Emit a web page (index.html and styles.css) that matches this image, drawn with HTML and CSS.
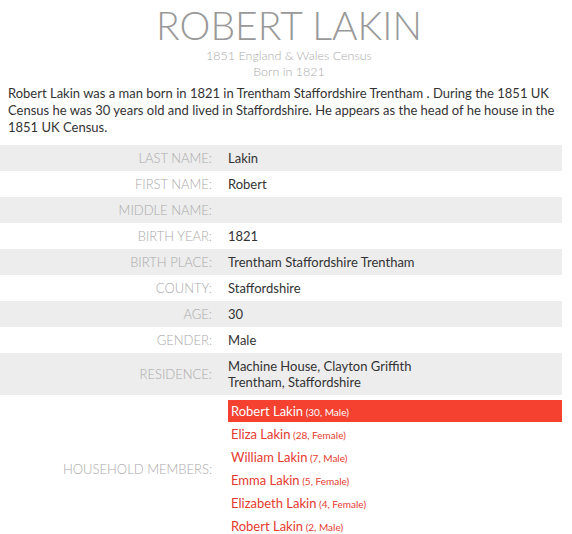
FILE: index.html
```html
<!DOCTYPE html>
<html>
<head>
<meta charset="utf-8">
<link rel="stylesheet" href="styles.css">
</head>
<body>
<div class="page">
  <header class="head">
    <h1 class="title">ROBERT LAKIN</h1>
    <div class="sub">1851 England &amp; Wales Census</div>
    <div class="sub">Born in 1821</div>
  </header>
  <p class="intro">Robert Lakin was a man born in 1821 in Trentham Staffordshire Trentham . During the 1851 UK Census he was 30 years old and lived in Staffordshire. He appears as the head of he house in the 1851 UK Census.</p>
  <div class="facts">
    <div class="row"><div class="label">LAST NAME:</div><div class="value">Lakin</div></div>
    <div class="row"><div class="label">FIRST NAME:</div><div class="value">Robert</div></div>
    <div class="row"><div class="label">MIDDLE NAME:</div><div class="value"></div></div>
    <div class="row"><div class="label">BIRTH YEAR:</div><div class="value">1821</div></div>
    <div class="row"><div class="label">BIRTH PLACE:</div><div class="value">Trentham Staffordshire Trentham</div></div>
    <div class="row"><div class="label">COUNTY:</div><div class="value">Staffordshire</div></div>
    <div class="row"><div class="label">AGE:</div><div class="value">30</div></div>
    <div class="row"><div class="label">GENDER:</div><div class="value">Male</div></div>
    <div class="row"><div class="label">RESIDENCE:</div><div class="value">Machine House, Clayton Griffith<br>Trentham, Staffordshire</div></div>
    <div class="row household"><div class="label">HOUSEHOLD MEMBERS:</div>
      <div class="value members">
        <div class="member current">Robert Lakin<small> (30, Male)</small></div>
        <div class="member">Eliza Lakin<small> (28, Female)</small></div>
        <div class="member">William Lakin<small> (7, Male)</small></div>
        <div class="member">Emma Lakin<small> (5, Female)</small></div>
        <div class="member">Elizabeth Lakin<small> (4, Female)</small></div>
        <div class="member">Robert Lakin<small> (2, Male)</small></div>
      </div>
    </div>
  </div>
</div>
</body>
</html>
```
FILE: styles.css
```css
html, body {
  margin: 0;
  padding: 0;
  background: #fff;
}
body {
  font-family: Lato, "Open Sans", sans-serif;
  font-size: 13px;
  color: #333;
}
.page {
  width: 562px;
  padding: 0 2px 0 8px;
}
.head {
  text-align: center;
  padding-top: 3px;
}
.title {
  margin: 0;
  font-size: 39px;
  font-weight: 300;
  color: #999;
  line-height: 45px;
}
.sub {
  font-size: 12.5px;
  font-weight: 300;
  color: #aaa;
  line-height: 16px;
}
.intro {
  margin: 5px 0 9px;
  line-height: 17px;
}
.facts {
  margin-left: -8px;
  width: 562px;
}
.row {
  display: grid;
  grid-template-columns: 220px 1fr;
  column-gap: 8px;
  align-items: center;
  padding: 5px 0;
  line-height: 16px;
}
.row:nth-child(odd) {
  background: #ededed;
}
.label {
  text-align: right;
  color: #aaa;
  font-weight: 300;
  padding-right: 8px;
}
.value {
  min-height: 16px;
}
.household {
  padding: 5px 0 0;
}
.members {
  display: flex;
  flex-direction: column;
}
.member {
  color: #e53a2e;
  height: 23px;
  line-height: 22px;
  padding-left: 3px;
}
.member small {
  font-size: 10px;
}
.member.current {
  background: #f44130;
  color: #fff;
  height: 22px;
  margin-bottom: 1px;
}
```
